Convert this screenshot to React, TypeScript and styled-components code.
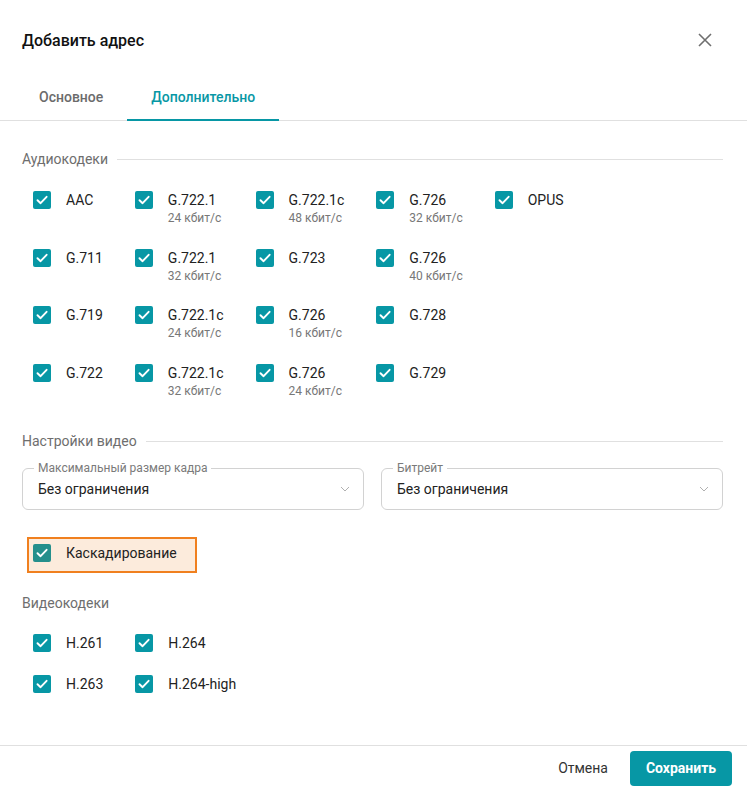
import styled, { createGlobalStyle } from "styled-components";

const TEAL = "#0797a5";

const GlobalStyle = createGlobalStyle`
body {
  margin: 0;
  background: #fff;
  font-family: Roboto, "Noto Sans", "Liberation Sans", sans-serif;
  color: #212121;
}
`;

type Codec = {
  name: string;
  rate?: string;
};

const audioCodecs: Codec[] = [
  { name: "AAC" },
  { name: "G.711" },
  { name: "G.719" },
  { name: "G.722" },
  { name: "G.722.1", rate: "24 кбит/с" },
  { name: "G.722.1", rate: "32 кбит/с" },
  { name: "G.722.1c", rate: "24 кбит/с" },
  { name: "G.722.1c", rate: "32 кбит/с" },
  { name: "G.722.1c", rate: "48 кбит/с" },
  { name: "G.723" },
  { name: "G.726", rate: "16 кбит/с" },
  { name: "G.726", rate: "24 кбит/с" },
  { name: "G.726", rate: "32 кбит/с" },
  { name: "G.726", rate: "40 кбит/с" },
  { name: "G.728" },
  { name: "G.729" },
  { name: "OPUS" },
];

const videoCodecs: Codec[] = [
  { name: "H.261" },
  { name: "H.263" },
  { name: "H.264" },
  { name: "H.264-high" },
];

const Dialog = styled.div`
display: flex;
flex-direction: column;
width: 747px;
height: 796px;
background: #fff;
`;

const Header = styled.header`
display: flex;
align-items: center;
justify-content: space-between;
height: 76px;
padding: 4px 35px 0 22px;
box-sizing: border-box;
`;

const Title = styled.h1`
margin: 0;
font-size: 16px;
font-weight: 500;
color: #111;
`;

const CloseButton = styled.button`
display: flex;
border: none;
background: none;
padding: 0;
cursor: pointer;
`;

const Tabs = styled.nav`
display: flex;
padding-left: 15px;
border-bottom: 1px solid #e0e0e0;
`;

const Tab = styled.div<{ $active?: boolean }>`
display: flex;
align-items: center;
height: 45px;
padding: 0 24px 2px;
box-sizing: border-box;
margin-bottom: -1px;
font-size: 14px;
font-weight: 500;
color: ${(p) => (p.$active ? TEAL : "#6b6b6b")};
border-bottom: 2px solid ${(p) => (p.$active ? TEAL : "transparent")};
`;

const Body = styled.main`
flex: 1;
padding: 28px 24px 0 22px;
`;

const SectionTitle = styled.div<{ $line?: boolean }>`
display: flex;
align-items: center;
gap: 9px;
font-size: 14px;
line-height: 20px;
color: #6e6e6e;

&::after {
  content: "";
  flex: 1;
  height: 1px;
  background: ${(p) => (p.$line ? "#e0e0e0" : "transparent")};
}
`;

const Spacer = styled.div<{ $h: number }>`
height: ${(p) => p.$h}px;
`;

const CodecGrid = styled.div<{ $rows: number; $rowHeight: number }>`
display: grid;
grid-auto-flow: column;
grid-template-rows: repeat(${(p) => p.$rows}, ${(p) => p.$rowHeight}px);
justify-content: start;
column-gap: 32px;
padding-left: 11px;
`;

const Item = styled.label`
display: flex;
align-items: flex-start;
gap: 15px;
`;

const Box = styled.span<{ $tone?: string }>`
display: flex;
align-items: center;
justify-content: center;
flex: none;
width: 18px;
height: 18px;
border-radius: 2px;
background: ${(p) => p.$tone || TEAL};
`;

const LabelText = styled.span`
display: flex;
flex-direction: column;
font-size: 14px;
line-height: 18px;
color: #222;
`;

const Rate = styled.span`
font-size: 12px;
line-height: 18px;
color: #777;
`;

const SelectRow = styled.div`
display: grid;
grid-template-columns: 1fr 1fr;
gap: 17px;
margin-top: 17px;
`;

const Select = styled.div`
position: relative;
display: flex;
align-items: center;
justify-content: space-between;
height: 40px;
padding: 0 13px 0 15px;
border: 1px solid #d2d2d2;
border-radius: 6px;
font-size: 14px;
color: #222;
`;

const FloatingLabel = styled.span`
position: absolute;
top: -8px;
left: 11px;
padding: 0 4px;
background: #fff;
font-size: 12px;
line-height: 14px;
color: #7a7a7a;
`;

const Highlight = styled.div`
display: inline-flex;
margin: 27px 0 0 5px;
padding: 5px 18px 9px 4px;
border: 2px solid #f0801f;
background: #fcebdc;
`;

const Footer = styled.footer`
display: flex;
align-items: center;
justify-content: flex-end;
gap: 22px;
height: 51px;
padding: 0 15px 6px 0;
box-sizing: border-box;
border-top: 1px solid #e0e0e0;
`;

const TextButton = styled.button`
border: none;
background: none;
padding: 0;
font-family: inherit;
font-size: 14px;
color: #333;
`;

const PrimaryButton = styled.button`
width: 102px;
height: 35px;
border: none;
border-radius: 4px;
background: ${TEAL};
color: #fff;
font-family: inherit;
font-size: 14px;
font-weight: 700;
`;

const Check = function () {
  return (
    <svg width="14" height="14" viewBox="0 0 14 14">
      <polyline points="2.5,7.2 5.6,10.2 11.6,3.8" fill="none" stroke="#fff" strokeWidth="1.9" strokeLinecap="round" strokeLinejoin="round" />
    </svg>
  );
};

const Chevron = function () {
  return (
    <svg width="10" height="6" viewBox="0 0 10 6">
      <polyline points="1,1 5,5 9,1" fill="none" stroke="#b0b0b0" strokeWidth="1" />
    </svg>
  );
};

const CodecItem = function (props: { codec: Codec; tone?: string }) {
  return (
    <Item>
      <Box $tone={props.tone}><Check /></Box>
      <LabelText>
        {props.codec.name}
        {props.codec.rate && <Rate>{props.codec.rate}</Rate>}
      </LabelText>
    </Item>
  );
};

export default function App() {
  return (
    <>
      <GlobalStyle />
      <Dialog>
        <Header>
          <Title>Добавить адрес</Title>
          <CloseButton aria-label="Закрыть">
            <svg width="14" height="14" viewBox="0 0 14 14">
              <path d="M1 1 13 13M13 1 1 13" stroke="#6f6f6f" strokeWidth="1.6" />
            </svg>
          </CloseButton>
        </Header>
        <Tabs>
          <Tab>Основное</Tab>
          <Tab $active>Дополнительно</Tab>
        </Tabs>
        <Body>
          <SectionTitle $line>Аудиокодеки</SectionTitle>
          <Spacer $h={22} />
          <CodecGrid $rows={4} $rowHeight={57.5}>
            {audioCodecs.map((c, i) => <CodecItem key={i} codec={c} />)}
          </CodecGrid>
          <Spacer $h={10} />
          <SectionTitle $line>Настройки видео</SectionTitle>
          <SelectRow>
            <Select>
              <FloatingLabel>Максимальный размер кадра</FloatingLabel>
              Без ограничения
              <Chevron />
            </Select>
            <Select>
              <FloatingLabel>Битрейт</FloatingLabel>
              Без ограничения
              <Chevron />
            </Select>
          </SelectRow>
          <Highlight>
            <CodecItem codec={{ name: "Каскадирование" }} tone="#258f8c" />
          </Highlight>
          <Spacer $h={20} />
          <SectionTitle>Видеокодеки</SectionTitle>
          <Spacer $h={21} />
          <CodecGrid $rows={2} $rowHeight={41}>
            {videoCodecs.map((c, i) => <CodecItem key={i} codec={c} />)}
          </CodecGrid>
        </Body>
        <Footer>
          <TextButton>Отмена</TextButton>
          <PrimaryButton>Сохранить</PrimaryButton>
        </Footer>
      </Dialog>
    </>
  );
}
